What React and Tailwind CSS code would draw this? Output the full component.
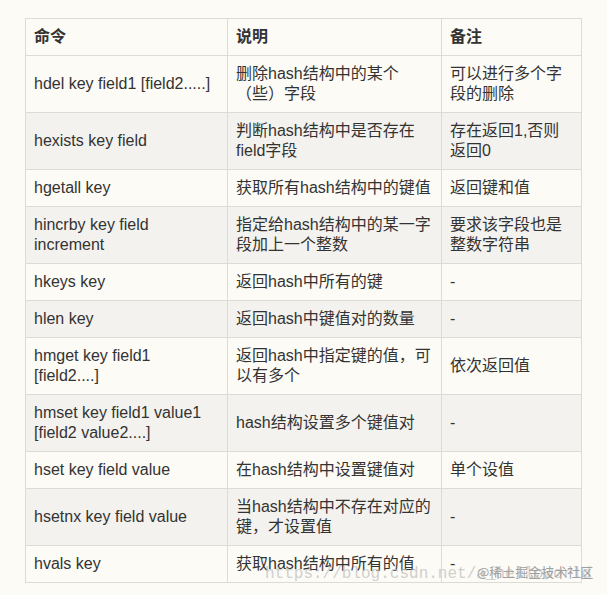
import React from "react";

const rows = [
  ["hdel key field1 [field2.....]", "删除hash结构中的某个（些）字段", "可以进行多个字段的删除"],
  ["hexists key field", "判断hash结构中是否存在field字段", "存在返回1,否则返回0"],
  ["hgetall key", "获取所有hash结构中的键值", "返回键和值"],
  ["hincrby key field increment", "指定给hash结构中的某一字段加上一个整数", "要求该字段也是整数字符串"],
  ["hkeys key", "返回hash中所有的键", "-"],
  ["hlen key", "返回hash中键值对的数量", "-"],
  ["hmget key field1 [field2....]", "返回hash中指定键的值，可以有多个", "依次返回值"],
  ["hmset key field1 value1 [field2 value2....]", "hash结构设置多个键值对", "-"],
  ["hset key field value", "在hash结构中设置键值对", "单个设值"],
  ["hsetnx key field value", "当hash结构中不存在对应的键，才设置值", "-"],
  ["hvals key", "获取hash结构中所有的值", "-"],
];

export default function App() {
  return (
    <div className="relative w-[607px] h-[595px] overflow-hidden bg-[#fcfbf6] pt-[18px] pl-[25px] font-['Liberation_Sans','Noto_Sans_CJK_SC',sans-serif] text-[16px] leading-[20px] text-[#333333]">
      <table className="table-fixed border-collapse w-[556px]">
        <colgroup>
          <col className="w-[202px]" />
          <col className="w-[214px]" />
          <col className="w-[140px]" />
        </colgroup>
        <thead>
          <tr>
            {["命令", "说明", "备注"].map((h) => (
              <th
                key={h}
                className="border border-[#dcdbd6] px-2 py-2 text-left font-bold"
              >
                {h}
              </th>
            ))}
          </tr>
        </thead>
        <tbody>
          {rows.map((r, i) => (
            <tr key={i} className={i % 2 === 1 ? "bg-[#f3f2ee]" : ""}>
              {r.map((c, j) => (
                <td
                  key={j}
                  className="border border-[#dcdbd6] px-2 py-2 align-middle break-words"
                >
                  {c}
                </td>
              ))}
            </tr>
          ))}
        </tbody>
      </table>

      {/* 水印 */}
      <div className="absolute left-[265px] top-[564px] font-['Liberation_Mono',monospace] text-[16px] leading-[20px] text-[#c4c4c4]/80 whitespace-nowrap pointer-events-none">
        https://blog.csdn.net/a_helloworld
      </div>
      <div className="absolute left-[477px] top-[563px] font-['Noto_Sans_CJK_SC',sans-serif] text-[13px] leading-[18px] text-[#a0a0a0] whitespace-nowrap pointer-events-none">
        @稀土掘金技术社区
      </div>
    </div>
  );
}
